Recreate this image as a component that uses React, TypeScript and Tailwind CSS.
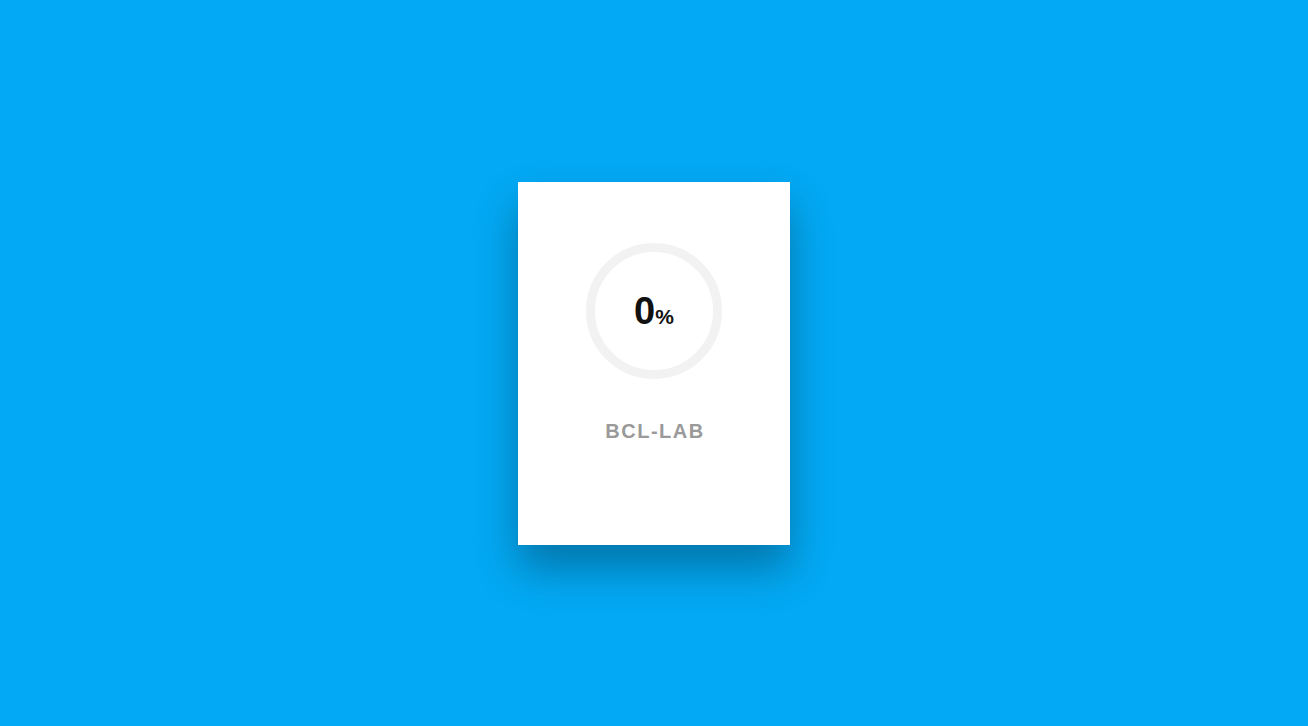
import React from 'react'

const progress = 0

export default function App() {
  const r = 63.5
  const c = 2 * Math.PI * r

  return (
    <div className="w-full h-[726px] bg-[#03a9f4] flex items-center justify-center font-['Liberation_Sans',Arial,sans-serif]">
      {/* Loader card */}
      <div className="w-[272px] h-[363px] bg-white flex flex-col items-center pt-[61px] shadow-[0_24px_40px_rgba(0,0,0,0.3)]">
        <div className="relative w-[136px] h-[136px]">
          <svg width="136" height="136" viewBox="0 0 136 136" className="absolute inset-0 -rotate-90">
            <circle cx="68" cy="68" r={r} fill="none" stroke="#f2f2f2" strokeWidth="9" />
            <circle
              cx="68"
              cy="68"
              r={r}
              fill="none"
              stroke="#03a9f4"
              strokeWidth="9"
              strokeDasharray={c}
              strokeDashoffset={c - (c * progress) / 100}
            />
          </svg>
          <div className="absolute inset-0 flex items-center justify-center">
            <span className="text-[38px] leading-none font-bold text-[#111] mt-[1px]">
              {progress}
              <span className="text-[21px] font-bold">%</span>
            </span>
          </div>
        </div>
        <h2 className="mt-[40px] text-[20px] leading-6 font-bold tracking-[1.5px] text-[#9a9a9a] pl-[2px]">
          BCL-LAB
        </h2>
      </div>
    </div>
  )
}
